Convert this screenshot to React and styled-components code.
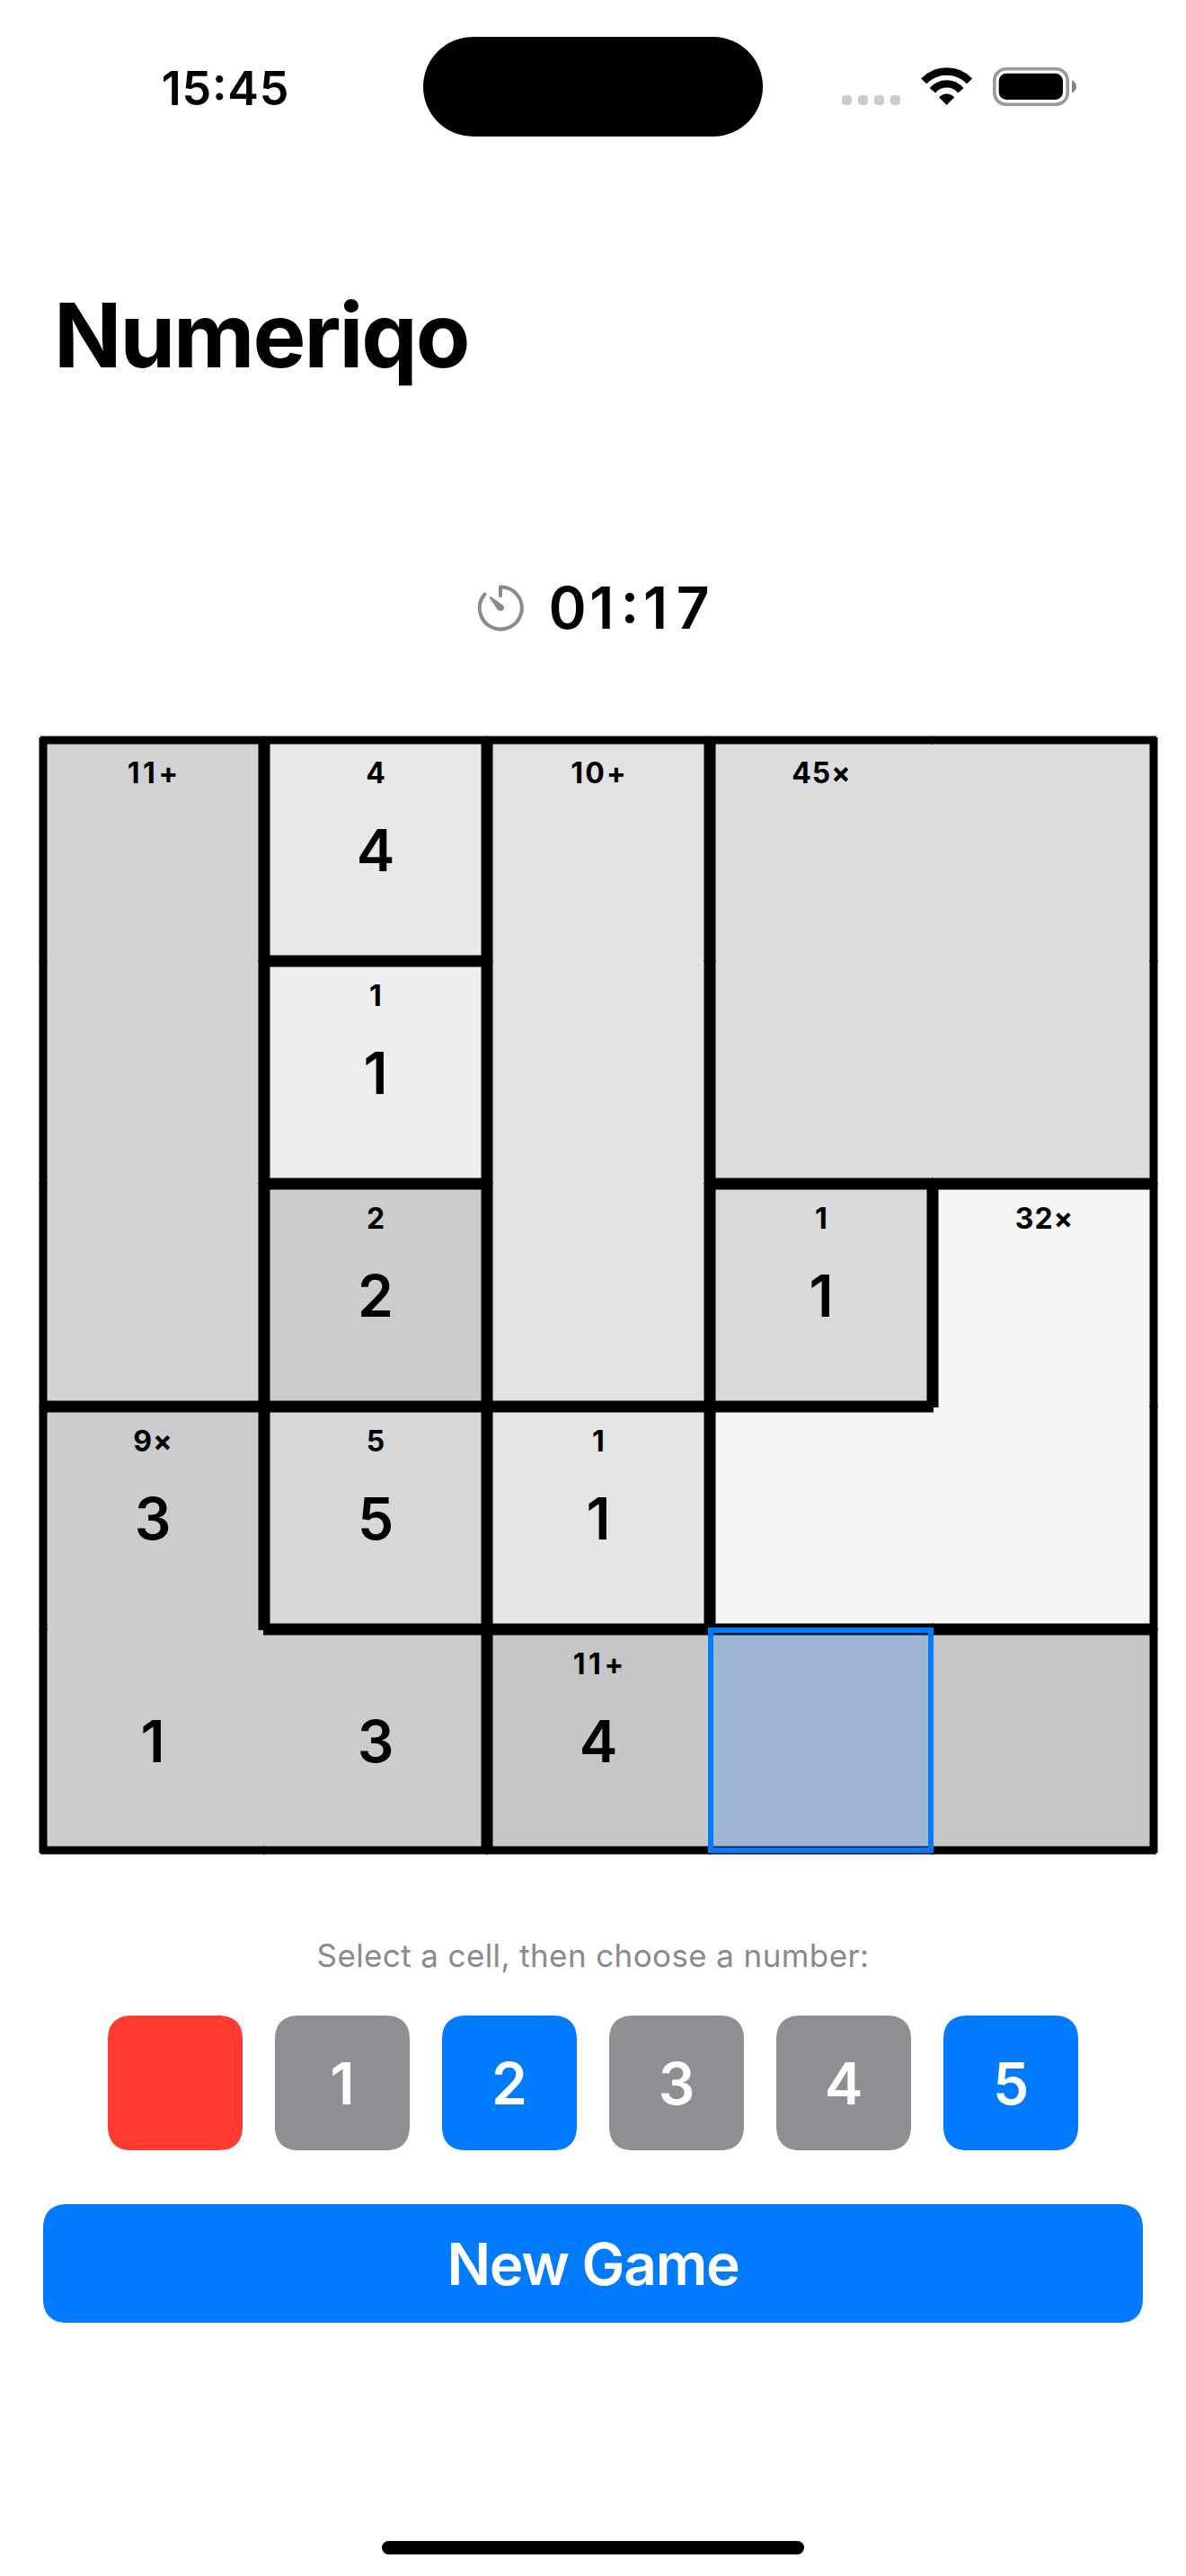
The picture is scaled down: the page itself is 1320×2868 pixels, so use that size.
import React, { useState } from 'react';
import styled, { createGlobalStyle, css } from 'styled-components';

const GlobalStyle = createGlobalStyle`
  * { box-sizing: border-box; }
  body {
    margin: 0;
    background: #fff;
    color: #000;
    font-family: Inter, 'Liberation Sans', sans-serif;
    -webkit-font-smoothing: antialiased;
  }
`;

const Screen = styled.main`
  width: 1320px;
  height: 2868px;
  display: flex;
  flex-direction: column;
  background: #fff;
`;

/* Status bar */

const StatusBar = styled.header`
  height: 193px;
  flex: none;
  display: grid;
  grid-template-columns: 471px 378px 471px;
  align-items: center;
`;

const Clock = styled.time`
  padding-left: 31px;
  padding-top: 4px;
  text-align: center;
  font-size: 52px;
  font-weight: 600;
  line-height: 63px;
  letter-spacing: 0.8px;
  font-feature-settings: 'case' 1;
`;

const Island = styled.div`
  height: 111px;
  border-radius: 56px;
  background: #000;
`;

const Indicators = styled.div`
  align-self: start;
  height: 44px;
  margin-top: 74px;
  padding-left: 88px;
  display: flex;
  align-items: flex-end;
`;

const SignalDots = styled.div`
  display: flex;
  gap: 7px;
  margin: 0 22px 1px 0;
`;

const Dot = styled.span`
  width: 11px;
  height: 11px;
  border-radius: 4px;
  background: #ccc;
`;

const WifiGlyph = styled.svg`
  width: 60px;
  height: 44px;
  margin-right: 20px;
`;

const BatteryGlyph = styled.svg`
  width: 96px;
  height: 44px;
`;

/* Heading and timer */

const Title = styled.h1`
  margin: 0;
  padding: 120px 0 0 60px;
  height: 433px;
  flex: none;
  font-size: 99px;
  font-weight: 700;
  line-height: 120px;
  letter-spacing: -2px;
`;

const TimerRow = styled.section`
  height: 100px;
  flex: none;
  display: flex;
  align-items: center;
  justify-content: center;
  gap: 26px;
`;

const TimerGlyph = styled.svg`
  width: 54px;
  height: 54px;
  margin-top: 1px;
`;

const Elapsed = styled.span`
  margin-top: 1px;
  font-size: 64px;
  font-weight: 600;
  line-height: 77px;
  font-feature-settings: 'case' 1;
`;

const TimeDigit = styled.span`
  letter-spacing: ${(p) => p.$gap}px;
`;

/* Board */

const Board = styled.section`
  margin: 96px 0 0 46px;
  width: 1240px;
  height: 1240px;
  flex: none;
  display: grid;
  grid-template-columns: repeat(5, 248px);
  grid-template-rows: repeat(5, 248px);
`;

const edge = (direction) =>
  `linear-gradient(to ${direction}, rgba(0,0,0,.5) 1px, #000 1px 9px, rgba(0,0,0,.5) 9px 10px)`;

const wallLayer = {
  l: `${edge('right')} left center / 10px 250px no-repeat`,
  r: `${edge('right')} right center / 10px 250px no-repeat`,
  t: `${edge('bottom')} center top / 250px 10px no-repeat`,
  b: `${edge('bottom')} center bottom / 250px 10px no-repeat`,
};

const Cell = styled.div`
  position: relative;
  display: grid;
  grid-template: 248px / 248px;
  background: ${(p) => p.$tone};

  &::before {
    content: '';
    position: absolute;
    z-index: 1;
    inset: -3px;
    background: ${(p) => [...p.$walls].map((w) => wallLayer[w]).join(', ') || 'none'};
  }

  ${(p) =>
    p.$selected &&
    css`
      &::after {
        content: '';
        position: absolute;
        z-index: 2;
        inset: -2px -1px -1px -2px;
        border: 6px solid #007aff;
        background: rgba(0, 122, 255, 0.2);
        background-clip: padding-box;
      }
    `}
`;

const Clue = styled.span`
  grid-area: 1 / 1;
  padding-top: 19px;
  justify-self: center;
  font-size: 32px;
  font-weight: 700;
  line-height: 39px;
  letter-spacing: ${(p) => p.$tracking}px;
  margin-right: ${(p) => -p.$tracking}px;
`;

const Value = styled.span`
  grid-area: 1 / 1;
  place-self: start center;
  padding-top: 86px;
  font-size: 64px;
  font-weight: 600;
  line-height: 77px;
`;

/* Controls */

const Prompt = styled.p`
  margin: 85px 0 0;
  height: 60px;
  flex: none;
  text-align: center;
  color: #8a8a8e;
  font-size: 35px;
  line-height: 60px;
  letter-spacing: 0.39px;
`;

const Keypad = styled.div`
  margin-top: 37px;
  flex: none;
  display: flex;
  justify-content: center;
  gap: 36px;
`;

const keyColors = { clear: '#ff3b30', used: '#8e8e93', open: '#007aff' };

const Key = styled.button`
  width: 150px;
  height: 150px;
  padding: 1px 0 0;
  border: 0;
  border-radius: 28px;
  corner-shape: superellipse(1.3);
  background: ${(p) => keyColors[p.$kind]};
  color: #fff;
  font: 600 64px / 149px Inter, 'Liberation Sans', sans-serif;
`;

const NewGame = styled.button`
  margin: 60px 48px 0;
  height: 132px;
  flex: none;
  padding: 1px 0 0;
  border: 0;
  border-radius: 28px;
  corner-shape: superellipse(1.3);
  background: #007aff;
  color: #fff;
  font: 600 64px / 131px Inter, 'Liberation Sans', sans-serif;
  letter-spacing: -1.3px;
`;

const HomeBar = styled.div`
  width: 470px;
  height: 15px;
  margin: auto auto 24px;
  border-radius: 8px;
  background: #000;
`;

const CELLS = [
  { cage: 'A', clue: '11+' }, { cage: 'B', clue: '4', value: 4 }, { cage: 'C', clue: '10+' }, { cage: 'D', clue: '45×' }, { cage: 'D' },
  { cage: 'A' }, { cage: 'E', clue: '1', value: 1 }, { cage: 'C' }, { cage: 'D' }, { cage: 'D' },
  { cage: 'A' }, { cage: 'F', clue: '2', value: 2 }, { cage: 'C' }, { cage: 'G', clue: '1', value: 1 }, { cage: 'H', clue: '32×' },
  { cage: 'I', clue: '9×', value: 3 }, { cage: 'J', clue: '5', value: 5 }, { cage: 'K', clue: '1', value: 1 }, { cage: 'H' }, { cage: 'H' },
  { cage: 'I', value: 1 }, { cage: 'I', value: 3 }, { cage: 'L', clue: '11+', value: 4 }, { cage: 'L' }, { cage: 'L' },
];

const TONES = {
  A: '#d2d2d4', B: '#e8e8e8', C: '#e2e2e2', D: '#dddddf', E: '#eeeeee', F: '#cccccc',
  G: '#d9d9d9', H: '#f4f4f4', I: '#ccccce', J: '#d7d7d9', K: '#e5e5e5', L: '#c6c6c8',
};

/* Clues with narrow ones are opened up so that all clues keep an even rhythm. */
const TRACKING = { '11+': 3.7, '10+': 2.2 };

const ELAPSED = [['0', 3.7], ['1', 7.4], [':', 4.9], ['1', 9.6], ['7', 0]];

function wallsOf(i) {
  const row = Math.floor(i / 5);
  const col = i % 5;
  const differs = (r, c) =>
    r < 0 || c < 0 || r > 4 || c > 4 || CELLS[r * 5 + c].cage !== CELLS[i].cage;
  return [
    differs(row, col - 1) && 'l',
    differs(row, col + 1) && 'r',
    differs(row - 1, col) && 't',
    differs(row + 1, col) && 'b',
  ].filter(Boolean).join('');
}

function Wifi() {
  return (
    <WifiGlyph viewBox="372 72 180 132" fill="none" stroke="#000">
      <path d="M384.6 121.2A105.5 105.5 0 0 1 537.4 121.2" strokeWidth="25" />
      <path d="M413.6 152.3A62 62 0 0 1 508.4 152.3" strokeWidth="25" />
      <path d="M461 200L436.5 175A33 33 0 0 1 485.5 175Z" fill="#000" strokeWidth="2" strokeLinejoin="round" />
    </WifiGlyph>
  );
}

function Battery() {
  return (
    <BatteryGlyph viewBox="0 0 96 44">
      <rect x="2.8" y="2.8" width="81.4" height="39.4" rx="13" fill="none" stroke="#999" strokeWidth="3.6" />
      <rect x="7.7" y="7.8" width="71.3" height="29.2" rx="8.5" />
      <path d="M89 15.6C91.9 16.6 94 19.2 94 22.6S91.9 28.4 89 29.4Z" fill="#858585" />
    </BatteryGlyph>
  );
}

function Stopwatch() {
  return (
    <TimerGlyph viewBox="85 89 162 162" fill="none" stroke="#8a8a8e" strokeWidth="12" strokeLinecap="round" strokeLinejoin="round">
      <path d="M166 129V99.5A70.5 70.5 0 1 1 113.5 124" />
      <path d="M131 131.500C129 134 130 136 131 137.500L153.500 171.500C161 186 179 180 178.500 168.500C178 162 174 159.500 170 157L135 132.500C133.500 131.300 132 131 131 131.500Z" fill="#8a8a8e" stroke="none" />
    </TimerGlyph>
  );
}

export default function App() {
  const [selected, setSelected] = useState(23);
  return (
    <Screen>
      <GlobalStyle />
      <StatusBar>
        <Clock>15:45</Clock>
        <Island />
        <Indicators>
          <SignalDots>
            <Dot /><Dot /><Dot /><Dot />
          </SignalDots>
          <Wifi />
          <Battery />
        </Indicators>
      </StatusBar>
      <Title>Numeriqo</Title>
      <TimerRow>
        <Stopwatch />
        <Elapsed>
          {ELAPSED.map(([char, gap], i) => (
            <TimeDigit key={i} $gap={gap}>{char}</TimeDigit>
          ))}
        </Elapsed>
      </TimerRow>
      <Board>
        {CELLS.map((cell, i) => (
          <Cell
            key={i}
            $tone={TONES[cell.cage]}
            $walls={wallsOf(i)}
            $selected={i === selected}
            onClick={() => setSelected(i)}
          >
            {cell.clue && <Clue $tracking={TRACKING[cell.clue] ?? 0.9}>{cell.clue}</Clue>}
            {cell.value && <Value>{cell.value}</Value>}
          </Cell>
        ))}
      </Board>
      <Prompt>Select a cell, then choose a number:</Prompt>
      <Keypad>
        <Key $kind="clear" aria-label="Clear" />
        <Key $kind="used">1</Key>
        <Key $kind="open">2</Key>
        <Key $kind="used">3</Key>
        <Key $kind="used">4</Key>
        <Key $kind="open">5</Key>
      </Keypad>
      <NewGame>New Game</NewGame>
      <HomeBar />
    </Screen>
  );
}
